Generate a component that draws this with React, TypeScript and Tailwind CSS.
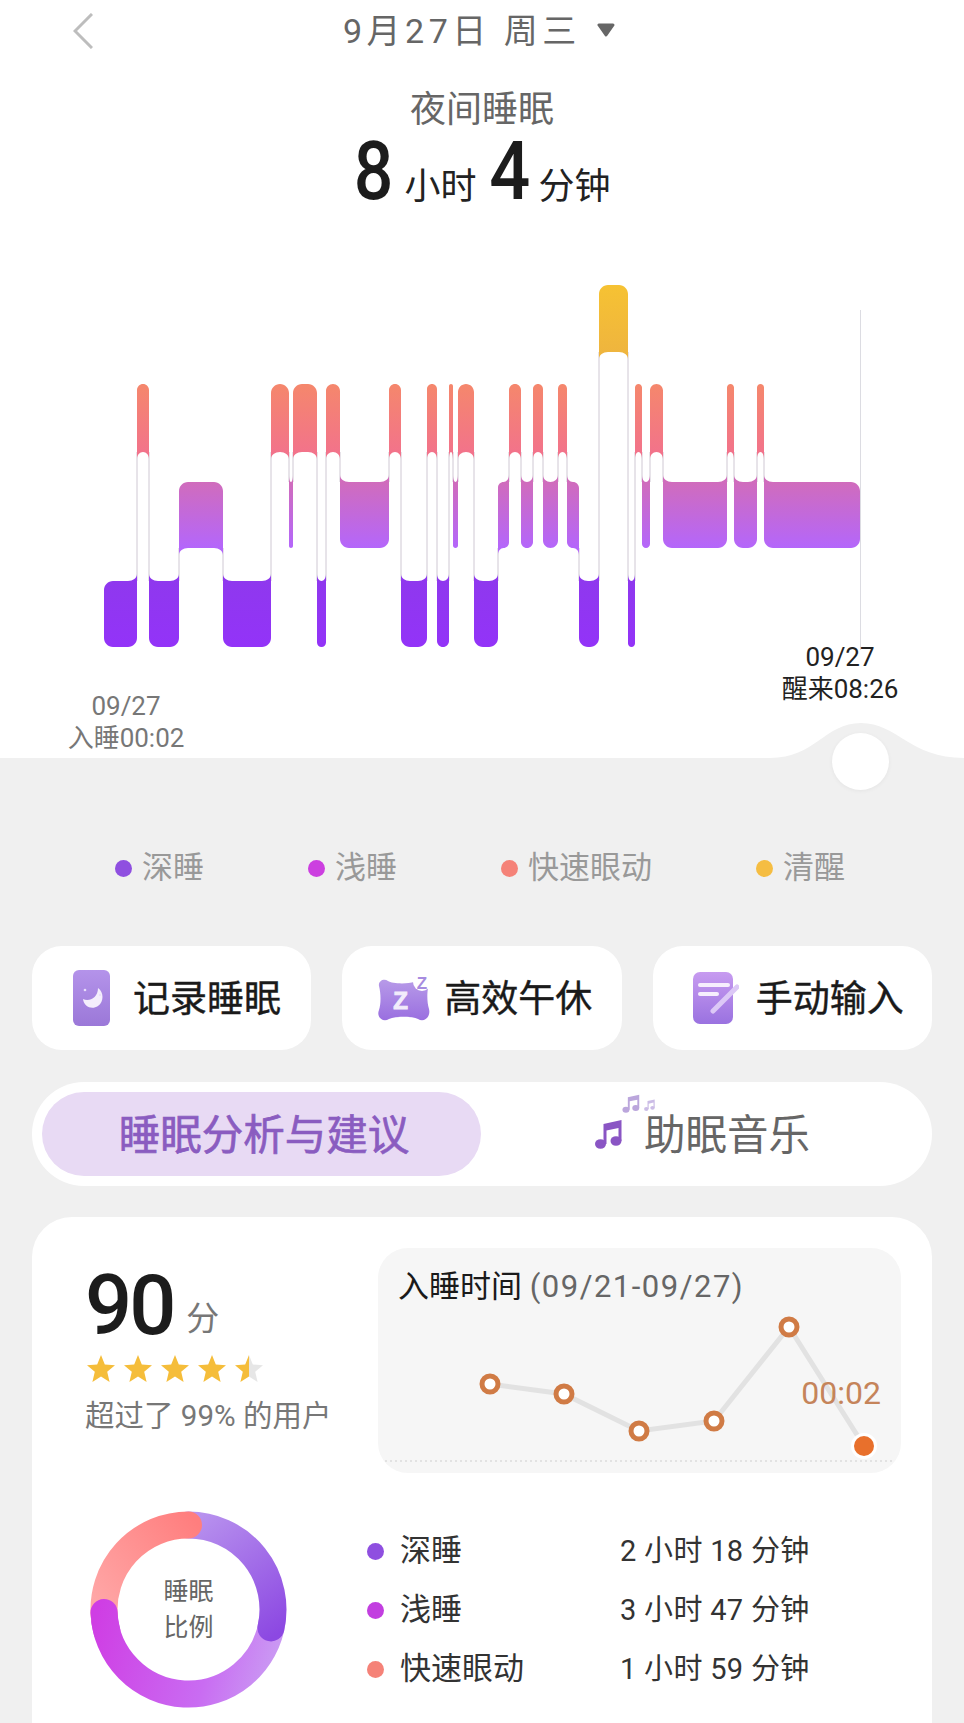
import React from "react";

type Level = "deep" | "light" | "rem" | "wake";

const LEVELS: Record<Level, { top: number; bottom: number; fill: string }> = {
  wake: { top: 285, bottom: 352, fill: "url(#wakeFill)" },
  rem: { top: 384, bottom: 452, fill: "url(#remFill)" },
  light: { top: 482, bottom: 548, fill: "url(#lightFill)" },
  deep: { top: 581, bottom: 647, fill: "url(#deepFill)" },
};

// x start, x end, stage of each block of the night
const SEGMENTS: [number, number, Level][] = [
  [104, 137, "deep"],
  [137, 149, "rem"],
  [149, 179, "deep"],
  [179, 223, "light"],
  [223, 271, "deep"],
  [271, 289, "rem"],
  [289, 293, "light"],
  [293, 317, "rem"],
  [317, 326, "deep"],
  [326, 340, "rem"],
  [340, 389, "light"],
  [389, 401, "rem"],
  [401, 427, "deep"],
  [427, 437, "rem"],
  [437, 449, "deep"],
  [449, 453, "rem"],
  [453, 458, "light"],
  [458, 474, "rem"],
  [474, 498, "deep"],
  [498, 509, "light"],
  [509, 521, "rem"],
  [521, 533, "light"],
  [533, 543, "rem"],
  [543, 558, "light"],
  [558, 567, "rem"],
  [567, 579, "light"],
  [579, 599, "deep"],
  [599, 628, "wake"],
  [628, 635, "deep"],
  [635, 642, "rem"],
  [642, 650, "light"],
  [650, 663, "rem"],
  [663, 727, "light"],
  [727, 734, "rem"],
  [734, 757, "light"],
  [757, 764, "rem"],
  [764, 860, "light"],
];

// round corner from the current point (ax, ay) over (cx, cy) to (bx, by)
function corner(ax: number, ay: number, cx: number, cy: number, bx: number, by: number) {
  const k = 0.55;
  return `C${ax + (cx - ax) * k} ${ay + (cy - ay) * k} ${bx + (cx - bx) * k} ${by + (cy - by) * k} ${bx} ${by}`;
}

function blockPath(i: number) {
  const [x1, x2, level] = SEGMENTS[i];
  const { top, bottom } = LEVELS[level];
  const prev = i > 0 ? LEVELS[SEGMENTS[i - 1][2]].top : null;
  const next = i < SEGMENTS.length - 1 ? LEVELS[SEGMENTS[i + 1][2]].top : null;
  const r = Math.min(9, (x2 - x1) / 2);
  const flare = 7;

  const topLeft = prev !== null && prev < top ? top - flare : top + r;
  const topRight = next !== null && next < top ? top - flare : top + r;
  const bottomRight = next !== null && next > top ? bottom + flare : bottom - r;
  const bottomLeft = prev !== null && prev > top ? bottom + flare : bottom - r;

  return [
    `M${x1} ${topLeft}`,
    corner(x1, topLeft, x1, top, x1 + r, top),
    `L${x2 - r} ${top}`,
    corner(x2 - r, top, x2, top, x2, topRight),
    `L${x2} ${bottomRight}`,
    corner(x2, bottomRight, x2, bottom, x2 - r, bottom),
    `L${x1 + r} ${bottom}`,
    corner(x1 + r, bottom, x1, bottom, x1, bottomLeft),
    "Z",
  ].join(" ");
}

function SleepChart() {
  return (
    <svg viewBox="0 270 964 488" className="block h-[488px] w-[964px]">
      <defs>
        <linearGradient id="wakeFill" gradientUnits="userSpaceOnUse" x1="0" y1="285" x2="0" y2="352">
          <stop offset="0" stopColor="#f6c233" />
          <stop offset="1" stopColor="#efb53e" />
        </linearGradient>
        <linearGradient id="remFill" gradientUnits="userSpaceOnUse" x1="0" y1="384" x2="0" y2="456">
          <stop offset="0" stopColor="#f5876c" />
          <stop offset="1" stopColor="#f2728c" />
        </linearGradient>
        <linearGradient id="lightFill" gradientUnits="userSpaceOnUse" x1="0" y1="482" x2="0" y2="548">
          <stop offset="0" stopColor="#d06cbc" />
          <stop offset="1" stopColor="#b466fb" />
        </linearGradient>
        <linearGradient id="deepFill" gradientUnits="userSpaceOnUse" x1="0" y1="581" x2="0" y2="647">
          <stop offset="0" stopColor="#8f38ee" />
          <stop offset="1" stopColor="#9333f8" />
        </linearGradient>
      </defs>

      <line x1="860.5" y1="310" x2="860.5" y2="650" stroke="#dcdce2" strokeWidth="1" />

      {SEGMENTS.slice(1).map(([x], i) => {
        const a = LEVELS[SEGMENTS[i][2]];
        const b = LEVELS[SEGMENTS[i + 1][2]];
        const upper = a.top < b.top ? a : b;
        const lower = a.top < b.top ? b : a;
        return (
          <line
            key={x}
            x1={x}
            x2={x}
            y1={upper.bottom}
            y2={lower.top}
            stroke="#cfc8d3"
            strokeWidth="1"
          />
        );
      })}

      {SEGMENTS.map(([x, , level], i) => (
        <path key={x} d={blockPath(i)} fill={LEVELS[level].fill} />
      ))}

      {/* grey hill the scrubber sits on */}
      <path
        d="M770 758 C815 758 825 723 861 723 C897 723 910 758 964 758 Z"
        fill="#f0f0f0"
      />
    </svg>
  );
}

function RingArc({
  from,
  to,
  stroke,
}: {
  from: number;
  to: number;
  stroke: string;
}) {
  const c = 98.5;
  const r = 84.5;
  const pt = (deg: number) => {
    const a = ((deg - 90) * Math.PI) / 180;
    return `${(c + r * Math.cos(a)).toFixed(2)} ${(c + r * Math.sin(a)).toFixed(2)}`;
  };
  const large = to - from > 180 ? 1 : 0;
  return (
    <path
      d={`M${pt(from)} A${r} ${r} 0 ${large} 1 ${pt(to)}`}
      fill="none"
      stroke={stroke}
      strokeWidth="27"
      strokeLinecap="round"
    />
  );
}

function SleepRing() {
  return (
    <div className="relative h-[197px] w-[197px] shrink-0">
      <svg viewBox="0 0 197 197" className="block h-[197px] w-[197px]">
        <defs>
          <linearGradient id="ringDeep" gradientUnits="userSpaceOnUse" x1="100" y1="10" x2="185" y2="125">
            <stop offset="0" stopColor="#b892ee" />
            <stop offset="1" stopColor="#8c48e2" />
          </linearGradient>
          <linearGradient id="ringLight" gradientUnits="userSpaceOnUse" x1="10" y1="90" x2="190" y2="140">
            <stop offset="0" stopColor="#cf3ee4" />
            <stop offset="0.65" stopColor="#c96cf2" />
            <stop offset="1" stopColor="#ca9af3" />
          </linearGradient>
          <linearGradient id="ringRem" gradientUnits="userSpaceOnUse" x1="10" y1="95" x2="110" y2="15">
            <stop offset="0" stopColor="#ffa6a6" />
            <stop offset="1" stopColor="#ff7e7e" />
          </linearGradient>
        </defs>
        <RingArc from={98} to={268} stroke="url(#ringLight)" />
        <RingArc from={0} to={102.6} stroke="url(#ringDeep)" />
        <RingArc from={265} to={360} stroke="url(#ringRem)" />
        <RingArc from={255} to={268} stroke="url(#ringLight)" />
      </svg>
      <div className="absolute inset-0 flex flex-col items-center justify-center text-[25px] leading-[36px] text-[#666]">
        <span>睡眠</span>
        <span>比例</span>
      </div>
    </div>
  );
}

function Star({ half, id }: { half?: boolean; id: string }) {
  return (
    <svg viewBox="0 0 28 27" className="h-[27px] w-[28px]">
      {half && (
        <defs>
          <linearGradient id={id} x1="0" y1="0" x2="1" y2="0">
            <stop offset="0.5" stopColor="#f5bd3a" />
            <stop offset="0.5" stopColor="#e6e6e6" />
          </linearGradient>
        </defs>
      )}
      <polygon
        points="14,0 17.8,9.4 28,10.2 20.2,16.8 22.6,27 14,21.6 5.4,27 7.8,16.8 0,10.2 10.2,9.4"
        fill={half ? `url(#${id})` : "#f5bd3a"}
      />
    </svg>
  );
}

function NoteIcon({ className, color }: { className: string; color: string }) {
  return (
    <svg viewBox="0 0 27 30" className={className}>
      <ellipse cx="5.5" cy="25" rx="5.5" ry="4.8" fill={color} />
      <ellipse cx="21" cy="22" rx="5.5" ry="4.8" fill={color} />
      <path d="M8.5 25 V5 L26.5 1 V22 H23.5 V9 L11.5 11.6 V25 Z" fill={color} />
    </svg>
  );
}

function PhoneMoonIcon() {
  return (
    <svg viewBox="0 0 37 56" className="h-[56px] w-[37px]">
      <defs>
        <linearGradient id="phoneFill" x1="0" y1="0" x2="0" y2="1">
          <stop offset="0" stopColor="#b493ea" />
          <stop offset="1" stopColor="#9b78d8" />
        </linearGradient>
      </defs>
      <rect width="37" height="56" rx="6" fill="url(#phoneFill)" />
      <path
        d="M25 18 C31 22 31 32 25 36 C19 40 11 37 10 29 C16 32 25 28 25 18 Z"
        fill="#f4eefc"
      />
      <circle cx="12" cy="20" r="1.3" fill="#e8dcfa" />
      <circle cx="27" cy="25" r="1" fill="#e8dcfa" />
    </svg>
  );
}

function PillowIcon() {
  return (
    <svg viewBox="0 0 52 48" className="h-[48px] w-[52px]">
      <defs>
        <linearGradient id="pillowFill" x1="0" y1="0" x2="0" y2="1">
          <stop offset="0" stopColor="#b79ae8" />
          <stop offset="1" stopColor="#9a6fe0" />
        </linearGradient>
      </defs>
      <path
        d="M1 12 C0 7 6 4 10 7 C14 10 30 10 36 8 C44 4 51 8 50 14 C49 20 49 29 51 35 C53 43 46 49 40 45 C34 42 18 42 11 45 C5 49 -2 43 1 36 C3 30 3 20 1 12 Z"
        fill="url(#pillowFill)"
      />
      <text
        x="22.5"
        y="35"
        textAnchor="middle"
        fontSize="24"
        fontWeight="900"
        fontFamily="'Liberation Sans', sans-serif"
        stroke="#f2ecfb"
        strokeWidth="1"
        fill="#f2ecfb"
      >
        Z
      </text>
      <circle cx="44" cy="8" r="9" fill="#ffffff" />
      <text
        x="44"
        y="15"
        textAnchor="middle"
        fontSize="17"
        fontWeight="900"
        fontFamily="'Liberation Sans', sans-serif"
        fill="#a78ce0"
      >
        Z
      </text>
    </svg>
  );
}

function NoteInputIcon() {
  return (
    <svg viewBox="0 0 46 52" className="h-[52px] w-[46px]">
      <defs>
        <linearGradient id="noteFill" x1="0" y1="0" x2="0" y2="1">
          <stop offset="0" stopColor="#c79bf0" />
          <stop offset="1" stopColor="#9a72e0" />
        </linearGradient>
      </defs>
      <rect width="40" height="52" rx="7" fill="url(#noteFill)" />
      <path d="M7 13 H35" stroke="#f6eefd" strokeWidth="4" strokeLinecap="round" />
      <path d="M7 22 H24" stroke="#f6eefd" strokeWidth="4" strokeLinecap="round" />
      <path d="M20 39 L44 15" stroke="#dcc8f6" strokeWidth="5" strokeLinecap="round" />
    </svg>
  );
}

function BedtimeChart() {
  const points = [
    [112, 136],
    [186, 146],
    [261, 183],
    [336, 173],
    [411, 79],
  ];
  return (
    <svg viewBox="0 0 524 225" className="absolute inset-0 h-[225px] w-[524px]">
      <line x1="7" x2="517" y1="213" y2="213" stroke="#dcdcdc" strokeWidth="1.5" strokeDasharray="2 3" />
      <polyline
        points="112,136 186,146 261,183 336,173 411,79 486,198"
        fill="none"
        stroke="#e2e2e2"
        strokeWidth="5"
      />
      {points.map(([x, y]) => (
        <circle key={x} cx={x} cy={y} r="8" fill="#fff" stroke="#d07b45" strokeWidth="5" />
      ))}
      <circle cx="486" cy="198" r="13" fill="#fff" />
      <circle cx="486" cy="198" r="10" fill="#e8702c" />
    </svg>
  );
}

const LEGEND = [
  { label: "深睡", color: "bg-[#8f4fe0]" },
  { label: "浅睡", color: "bg-[#cc3fe0]" },
  { label: "快速眼动", color: "bg-[#f58278]" },
  { label: "清醒", color: "bg-[#f5bd42]" },
];

const RATIO_ROWS = [
  { label: "深睡", value: "2 小时 18 分钟", color: "bg-[#8f4fe0]" },
  { label: "浅睡", value: "3 小时 47 分钟", color: "bg-[#c23fe0]" },
  { label: "快速眼动", value: "1 小时 59 分钟", color: "bg-[#f58278]" },
];

export default function App() {
  return (
    <div className="h-[1723px] w-[964px] overflow-hidden bg-[#f0f0f0] font-['Roboto','Noto_Sans_CJK_SC',sans-serif]">
      {/* top white panel */}
      <div className="bg-white">
        <div className="flex h-[62px] items-center pl-[73px]">
          <svg viewBox="0 0 20 36" className="h-[36px] w-[20px]">
            <polyline points="19,1 2,18 19,35" fill="none" stroke="#bdbdbd" strokeWidth="3" />
          </svg>
          <span className="ml-[250px] text-[34px] tracking-[4.5px] text-[#666]">9月27日 周三</span>
          <svg viewBox="0 0 18 14" className="ml-[16px] -mt-[3px] h-[14px] w-[18px]">
            <path d="M2 2 H16 L9 12 Z" fill="#666" stroke="#666" strokeWidth="3" strokeLinejoin="round" />
          </svg>
        </div>

        <div className="mt-[23px] text-center text-[36px] leading-[50px] text-[#666]">夜间睡眠</div>

        <div className="-mt-[2px] flex h-[76px] items-baseline justify-center text-[36px] leading-[76px] text-[#222]">
          <span className="inline-block w-[36px] -translate-x-[2px] scale-x-[0.85] text-center text-[82px] font-medium text-[#1c1c1c]">8</span>
          <span className="ml-[15px]">小时</span>
          <span className="ml-[12px] inline-block w-[39px] -translate-x-[2px] scale-x-[0.88] text-center text-[82px] font-medium text-[#1c1c1c]">4</span>
          <span className="ml-[11px]">分钟</span>
        </div>

        <div className="relative z-10 mt-[61px] h-[488px]">
          <SleepChart />
          <div className="absolute left-[46px] top-[420px] w-[160px] text-center text-[26px] leading-[32px] text-[#777]">
            <div>09/27</div>
            <div>入睡00:02</div>
          </div>
          <div className="absolute left-[760px] top-[371px] w-[160px] text-center text-[26px] leading-[32px] text-[#222]">
            <div>09/27</div>
            <div>醒来08:26</div>
          </div>
          <div className="absolute left-[832px] top-[463px] h-[57px] w-[57px] rounded-full bg-white shadow-[0_1px_4px_rgba(0,0,0,0.05)]" />
        </div>
      </div>

      {/* legend */}
      <div className="mt-[90px] flex h-[40px] items-center gap-[104px] pl-[115px]">
        {LEGEND.map((item) => (
          <div key={item.label} className="flex items-center gap-[10px]">
            <span className={`h-[17px] w-[17px] rounded-full ${item.color}`} />
            <span className="text-[31px] leading-[40px] text-[#999]">{item.label}</span>
          </div>
        ))}
      </div>

      {/* quick actions */}
      <div className="mx-[32px] mt-[58px] grid grid-cols-3 gap-[31px]">
        <div className="flex h-[104px] items-center rounded-[30px] bg-white pl-[41px]">
          <PhoneMoonIcon />
          <span className="ml-[23px] pt-[4px] text-[37px] text-[#1a1a1a] [-webkit-text-stroke:0.4px_#1a1a1a]">记录睡眠</span>
        </div>
        <div className="flex h-[104px] items-center rounded-[30px] bg-white pl-[36px]">
          <PillowIcon />
          <span className="ml-[14px] pt-[4px] text-[37px] text-[#1a1a1a] [-webkit-text-stroke:0.4px_#1a1a1a]">高效午休</span>
        </div>
        <div className="flex h-[104px] items-center rounded-[30px] bg-white pl-[40px]">
          <NoteInputIcon />
          <span className="ml-[17px] pt-[4px] text-[37px] text-[#1a1a1a] [-webkit-text-stroke:0.4px_#1a1a1a]">手动输入</span>
        </div>
      </div>

      {/* tabs */}
      <div className="mx-[32px] mt-[32px] flex h-[104px] items-center rounded-full bg-white px-[10px]">
        <div className="flex h-[84px] w-[439px] items-center justify-center rounded-full bg-[#e8daf4] pl-[5px] pt-[5px] text-[41.5px] text-[#8a5cc0] [-webkit-text-stroke:0.7px_#8a5cc0]">
          睡眠分析与建议
        </div>
        <div className="relative ml-[114px] flex items-center">
          <NoteIcon className="h-[30px] w-[27px]" color="#8a55c4" />
          <NoteIcon className="absolute left-[27px] top-[-6px] h-[19px] w-[18px]" color="#bba6dc" />
          <NoteIcon className="absolute left-[48px] top-[-1px] h-[12px] w-[13px]" color="#cbbce6" />
          <span className="ml-[22px] pt-[5px] text-[41.5px] text-[#666]">助眠音乐</span>
        </div>
      </div>

      {/* analysis card */}
      <div className="mx-[32px] mt-[31px] h-[520px] rounded-t-[40px] bg-white">
        <div className="flex pl-[53px] pr-[31px] pt-[31px]">
          <div className="w-[293px] shrink-0 pt-[28px]">
            <div className="flex h-[59px] items-end leading-[59px]">
              <span className="text-[83px] font-medium tracking-[-3px] text-[#1c1c1c]">90</span>
              <span className="ml-[13px] -mb-[4px] text-[33px] leading-[40px] text-[#777]">分</span>
            </div>
            <div className="mt-[20px] flex gap-[9px] pl-[2px]">
              <Star id="s1" />
              <Star id="s2" />
              <Star id="s3" />
              <Star id="s4" />
              <Star id="s5" half />
            </div>
            <div className="mt-[14px] text-[29.5px] leading-[40px] text-[#777]">超过了 99% 的用户</div>
          </div>

          <div className="relative h-[225px] w-[524px] rounded-[30px] bg-[#f6f6f6]">
            <BedtimeChart />
            <div className="relative pl-[20px] pt-[18px] text-[31px] leading-[42px] text-[#1a1a1a]">
              入睡时间 <span className="tracking-[1.5px] text-[#666]">(09/21-09/27)</span>
            </div>
            <div className="absolute right-[20px] top-[125px] text-[32px] leading-[40px] text-[#c5845a]">00:02</div>
          </div>
        </div>

        <div className="mt-[38px] flex pl-[58px]">
          <SleepRing />
          <div className="ml-[80px] mt-[11px]">
            {RATIO_ROWS.map((row) => (
              <div key={row.label} className="flex h-[59px] items-center">
                <span className={`h-[17px] w-[17px] rounded-full ${row.color}`} />
                <span className="ml-[16px] w-[220px] text-[31px] text-[#333]">{row.label}</span>
                <span className="text-[29px] tracking-[0.3px] text-[#333]">{row.value}</span>
              </div>
            ))}
          </div>
        </div>
      </div>
    </div>
  );
}
